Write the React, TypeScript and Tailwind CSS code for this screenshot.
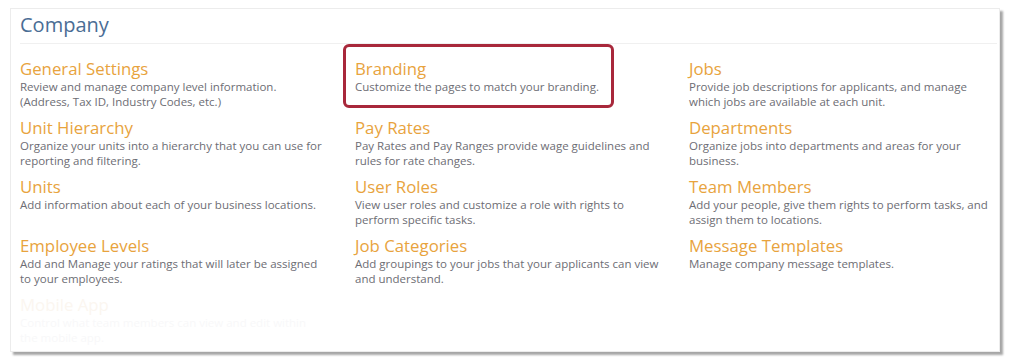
import React from "react";

type Item = { title: string; desc: string; highlight?: boolean; faded?: boolean };

const cols: Item[][] = [
  [
    { title: "General Settings", desc: "Review and manage company level information.\n(Address, Tax ID, Industry Codes, etc.)" },
    { title: "Unit Hierarchy", desc: "Organize your units into a hierarchy that you can use for reporting and filtering." },
    { title: "Units", desc: "Add information about each of your business locations." },
    { title: "Employee Levels", desc: "Add and Manage your ratings that will later be assigned to your employees." },
    { title: "Mobile App", desc: "Control what team members can view and edit within\nthe mobile app.", faded: true },
  ],
  [
    { title: "Branding", desc: "Customize the pages to match your branding.", highlight: true },
    { title: "Pay Rates", desc: "Pay Rates and Pay Ranges provide wage guidelines and rules for rate changes." },
    { title: "User Roles", desc: "View user roles and customize a role with rights to perform specific tasks." },
    { title: "Job Categories", desc: "Add groupings to your jobs that your applicants can view and understand." },
  ],
  [
    { title: "Jobs", desc: "Provide job descriptions for applicants, and manage which jobs are available at each unit." },
    { title: "Departments", desc: "Organize jobs into departments and areas for your business." },
    { title: "Team Members", desc: "Add your people, give them rights to perform tasks, and assign them to locations." },
    { title: "Message Templates", desc: "Manage company message templates." },
  ],
];

function Entry({ item }: { item: Item }) {
  return (
    <div className="relative h-[59px]">
      {item.highlight && (
        <div className="absolute left-[-12px] top-[-15px] w-[271px] h-[64px] border-[3px] border-[#a8283b] rounded-[6px]" />
      )}
      <div
        className={`text-[16.8px] leading-[20px] ${item.faded ? "text-[#fbf6f0]" : "text-[#e8a33d]"}`}
      >
        {item.title}
      </div>
      <div
        className={`text-[11.5px] leading-[15px] whitespace-pre-line ${item.faded ? "text-[#f8f8f9]" : "text-[#6d6d74]"} w-[310px]`}
      >
        {item.desc}
      </div>
    </div>
  );
}

export default function App() {
  return (
    <div
      className="w-[1012px] h-[359px] bg-white pt-[8px] pl-[10px]"
      style={{ fontFamily: '"Open Sans", "Noto Sans", sans-serif' }}
    >
      <div className="w-[990px] h-[344px] bg-white border border-[#ececec] shadow-[3px_3px_2px_rgba(0,0,0,0.35)] pl-[9px] pr-[2px] overflow-hidden">
        <div className="text-[20px] leading-[26px] text-[#4a6d95] pt-[3px] pb-[5px]">Company</div>
        <div className="h-px bg-[#f0f0f0]" />
        <div className="grid grid-cols-[335px_334px_1fr] pt-[15px]">
          {cols.map((col, i) => (
            <div key={i} className="flex flex-col">
              {col.map((it) => (
                <Entry key={it.title} item={it} />
              ))}
            </div>
          ))}
        </div>
      </div>
    </div>
  );
}
